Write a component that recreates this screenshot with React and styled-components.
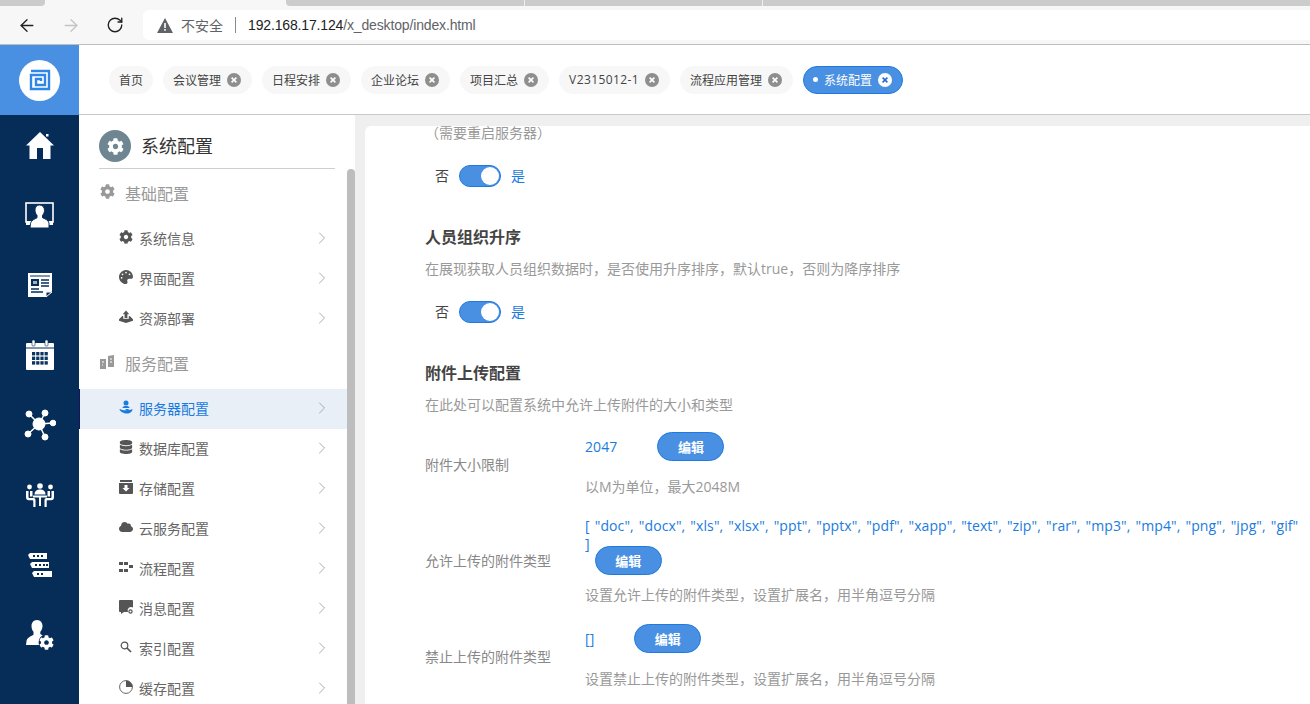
import React from 'react';
import styled, { createGlobalStyle } from 'styled-components';
import { ChevronRight, ArrowLeft, ArrowRight, RotateCw } from 'lucide-react';
import { FaCog, FaPalette, FaDatabase, FaCloud } from 'react-icons/fa';

const FONT = '"Open Sans", "Noto Sans CJK SC", sans-serif';
const BLUE = '#4a90e2';
const EDGE = '#1f7ae0';

const GlobalStyle = createGlobalStyle`
  html, body { margin: 0; padding: 0; height: 100%; overflow: hidden; background: #fff; }
  #root { height: 100%; }
  * { box-sizing: border-box; }
`;

const Page = styled.div`
  width: 1310px;
  height: 704px;
  display: flex;
  flex-direction: column;
  overflow: hidden;
  font-family: ${FONT};
  font-size: 14px;
`;

/* browser chrome */
const BrowserBar = styled.div`
  height: 45px;
  flex: none;
  background: #f7f7f7;
  border-bottom: 1px solid #bdbdbd;
  display: flex;
  flex-direction: column;
`;

const TabStrip = styled.div`
  height: 6px;
  display: grid;
  grid-template-columns: 45px 241px 239px 238px 1fr;
`;

const StripPiece = styled.div`
  background: ${p => (p.$open ? 'transparent' : '#cccccc')};
  border-radius: ${p => (p.$side === 'left' ? '0 0 4px 0' : p.$side === 'right' ? '0 0 0 4px' : '0')};
  border-right: ${p => (p.$split ? '1px solid #eeeeee' : 'none')};
`;

const Toolbar = styled.div`
  display: flex;
  align-items: flex-start;
  padding: 4px 0 0 17px;
`;

const NavButton = styled.div`
  width: 20px;
  height: 30px;
  margin-right: 24px;
  display: flex;
  align-items: center;
  justify-content: center;
  color: ${p => (p.$off ? '#c4c4c4' : '#222')};
`;

const Omnibox = styled.div`
  margin-left: -6px;
  flex: 1;
  height: 30px;
  background: #fff;
  border-radius: 6px 0 0 6px;
  display: flex;
  align-items: center;
  padding-left: 14px;
`;

const Insecure = styled.span`
  color: #5f6368;
  font-size: 14px;
  margin-left: 8px;
`;

const Divider = styled.span`
  width: 1px;
  height: 16px;
  background: #8a8a8a;
  margin: 0 12px;
`;

const Url = styled.span`
  font-family: "Liberation Sans", sans-serif;
  font-size: 14px;
  letter-spacing: -0.15px;
  color: #5f6368;
  b { font-weight: 400; color: #202124; }
`;

/* app header */
const Header = styled.header`
  height: 70px;
  flex: none;
  display: flex;
  border-bottom: 1px solid #c9c9c9;
`;

const LogoCell = styled.div`
  width: 79px;
  height: 70px;
  flex: none;
  background: ${BLUE};
  display: flex;
  align-items: center;
  justify-content: center;
`;

const LogoDisc = styled.div`
  width: 41px;
  height: 41px;
  border-radius: 50%;
  background: #fff;
  display: flex;
  align-items: center;
  justify-content: center;
`;

const TabBar = styled.nav`
  display: flex;
  align-items: center;
  gap: 10px;
  padding-left: 30px;
`;

const Tab = styled.div`
  height: 28px;
  display: flex;
  align-items: center;
  gap: 6px;
  padding: 0 ${p => (p.$plain ? '9px' : '10px')} 0 9px;
  border-radius: 14px;
  font-size: 12px;
  letter-spacing: ${p => (p.$latin ? '0.4px' : '0')};
  white-space: nowrap;
  color: ${p => (p.$active ? '#fff' : '#444')};
  background: ${p => (p.$active ? BLUE : '#f7f7f7')};
  border: 1px solid ${p => (p.$active ? EDGE : '#f7f7f7')};
`;

const TabDot = styled.span`
  width: 5px;
  height: 5px;
  border-radius: 50%;
  background: #fff;
`;

/* app body */
const Body = styled.div`
  flex: 1;
  display: flex;
  min-height: 0;
`;

const Rail = styled.aside`
  width: 79px;
  flex: none;
  background: #062c58;
  display: flex;
  flex-direction: column;
  align-items: center;
  gap: 40px;
  padding-top: 15px;
`;

const RailItem = styled.div`
  height: 30px;
  display: flex;
  align-items: center;
  justify-content: center;
`;

const Sidebar = styled.aside`
  width: 276px;
  flex: none;
  background: #fff;
  display: flex;
  flex-direction: column;
  min-height: 0;
`;

const SidebarHead = styled.div`
  height: 54px;
  flex: none;
  margin: 0 20px;
  padding-top: 15px;
  display: flex;
  align-items: flex-start;
  gap: 10px;
  border-bottom: 1px solid #cfcfcf;
  font-size: 18px;
  line-height: 32px;
  color: #333;
`;

const HeadBadge = styled.div`
  width: 32px;
  height: 32px;
  border-radius: 50%;
  background: #6e8592;
  display: flex;
  align-items: center;
  justify-content: center;
  color: #fff;
`;

const MenuWrap = styled.div`
  flex: 1;
  display: flex;
  min-height: 0;
`;

const Menu = styled.div`
  flex: 1;
  overflow: hidden;
`;

const ScrollTrack = styled.div`
  width: 8px;
  flex: none;
  background: #bdbdbd;
  border-radius: 4px 4px 0 0;
`;

const GroupRow = styled.div`
  height: 50px;
  display: flex;
  align-items: center;
  padding: 0 0 2px 20px;
  gap: 10px;
  font-size: 16px;
  color: #999;
`;

const GroupIcon = styled.span`
  width: 16px;
  height: 16px;
  margin-top: -3px;
  display: flex;
  align-items: center;
  justify-content: center;
  color: #999;
`;

const ItemRow = styled.div`
  height: 40px;
  display: flex;
  align-items: center;
  padding: 0 15px 2px ${p => (p.$active ? '39px' : '40px')};
  color: ${p => (p.$active ? '#1a7be0' : '#666')};
  background: ${p => (p.$active ? '#e9eff7' : 'transparent')};
  border-left: ${p => (p.$active ? '1px solid #14145a' : 'none')};
`;

const ItemIcon = styled.span`
  width: 14px;
  height: 14px;
  margin-right: 6px;
  margin-top: -2px;
  display: flex;
  align-items: center;
  justify-content: center;
  color: ${p => (p.$active ? '#1a7be0' : '#555')};
`;

const ItemLabel = styled.span`
  flex: 1;
`;

const Chevron = styled(ChevronRight)`
  color: #9a9a9a;
`;

/* main panel */
const Main = styled.main`
  flex: 1;
  min-width: 0;
  background: #efefef;
  padding: 11px 0 0 10px;
`;

const Card = styled.div`
  height: 100%;
  background: #fff;
  border-radius: 6px 0 0 0;
  padding-left: 60px;
  overflow: hidden;
`;

const RestartNote = styled.div`
  line-height: 14px;
  color: #999;
  white-space: nowrap;
`;

const SwitchRow = styled.div`
  display: flex;
  align-items: center;
  height: 22px;
  margin-top: ${p => p.$top}px;
  padding-left: 10px;
`;

const SwitchText = styled.span`
  margin-top: -2px;
  color: ${p => (p.$on ? '#1a7be0' : '#444')};
`;

const Track = styled.div`
  width: 42px;
  height: 22px;
  margin: 0 10px;
  border-radius: 11px;
  background: ${BLUE};
  border: 1px solid ${EDGE};
  display: flex;
  align-items: center;
  justify-content: flex-end;
  padding-right: 1px;
`;

const Knob = styled.span`
  width: 18px;
  height: 18px;
  border-radius: 50%;
  background: #fff;
`;

const SectionTitle = styled.h3`
  margin: 38px 0 0;
  font-size: 16px;
  line-height: 24px;
  font-weight: 700;
  color: #444;
`;

const SectionDesc = styled.p`
  margin: 10px 0 0;
  line-height: 20px;
  color: #999;
  white-space: nowrap;
`;

const ConfigTable = styled.div`
  margin-top: 17px;
  display: flex;
  flex-direction: column;
  gap: 19px;
`;

const ConfigRow = styled.div`
  display: grid;
  grid-template-columns: 160px 1fr;
  align-items: center;
`;

const ConfigLabel = styled.div`
  color: #888;
  padding-bottom: 2px;
`;

const ValueLine = styled.div`
  display: flex;
  align-items: ${p => (p.$top ? 'flex-start' : 'center')};
  color: #1a7be0;
  line-height: 18px;
  white-space: nowrap;
  letter-spacing: 0.1px;
  word-spacing: 1.3px;
`;

const EditButton = styled.button`
  width: 67px;
  height: 29px;
  margin-left: ${p => p.$left}px;
  margin-top: ${p => p.$top || 0}px;
  padding: 0;
  border-radius: 15px;
  background: ${BLUE};
  border: 1px solid ${EDGE};
  color: #fff;
  font-family: ${FONT};
  font-size: 13px;
  font-weight: 700;
`;

const Hint = styled.div`
  margin-top: ${p => p.$top}px;
  margin-bottom: ${p => p.$bottom || 0}px;
  line-height: 20px;
  color: #999;
`;

/* drawn icons */
const Logo = () => (
  <svg width="24" height="24" viewBox="0 0 24 24" fill="none" stroke="#2f86e6" strokeWidth="2.4">
    <path d="M3 3h18v18H3V7h14v10H8v-6h5v2" />
  </svg>
);

const CloseDot = ({ $active }) => (
  <svg width="14" height="14" viewBox="0 0 14 14">
    <circle cx="7" cy="7" r="7" fill={$active ? '#fff' : '#8e8e8e'} />
    <path d="M4.6 4.6l4.8 4.8M9.4 4.6L4.6 9.4" stroke={$active ? '#1f6fd0' : '#fff'} strokeWidth="1.6" />
  </svg>
);

const WarnIcon = () => (
  <svg width="16" height="15" viewBox="0 0 16 15">
    <path d="M8 0l8 15H0z" fill="#5f6368" />
    <path d="M7.2 5h1.600v5H7.200zM7.200 11h1.600v1.700H7.200z" fill="#fff" />
  </svg>
);

const HomeIcon = () => (
  <svg width="30" height="29" viewBox="0 0 30 29" fill="#fff">
    <path d="M15 1l14 13.500h-3.500V28H18V17h-6v11H4.500V14.500H1z" />
    <rect x="21" y="3" width="2.500" height="2.500" />
  </svg>
);

const MonitorIcon = () => (
  <svg width="29" height="27" viewBox="0 0 29 27">
    <rect x="1" y="1" width="27" height="19" fill="none" stroke="#fff" strokeWidth="1.600" />
    <path d="M1 19h27v4H1z" fill="#fff" />
    <path d="M14.500 3c3.200 0 5 2.400 5 5.300 0 2.200-1 4-2 5v2.400c2 1 6 2.200 6.500 5.300L24 26H5l.5-4.700c.6-3 4.500-4.500 6.500-5.500v-2.500c-1-1-2-2.800-2-5C10 5.400 11.300 3 14.500 3z" fill="#fff" stroke="#062c58" strokeWidth="1" />
  </svg>
);

const NewsIcon = () => (
  <svg width="26" height="26" viewBox="0 0 26 26">
    <path d="M1 1h24v18l-6 6H1z" fill="#fff" />
    <path d="M3 4h20" stroke="#062c58" strokeWidth="1" />
    <rect x="4" y="7" width="8" height="7" fill="#062c58" />
    <rect x="6" y="9" width="4" height="3" fill="#9fb0c5" />
    <path d="M14 8h8M14 11h8M14 14h8M4 17h8M4 20h12" stroke="#062c58" strokeWidth="1.500" />
    <path d="M19 25v-5h6z" fill="#062c58" stroke="#fff" strokeWidth="1" />
  </svg>
);

const CalendarIcon = () => (
  <svg width="28" height="30" viewBox="0 0 28 30">
    <rect x="0" y="3" width="28" height="27" rx="1" fill="#fff" />
    <path d="M0 8h28" stroke="#062c58" strokeWidth="1" />
    <rect x="6" y="0" width="3" height="6" rx="1" fill="#fff" stroke="#062c58" strokeWidth=".6" />
    <rect x="19" y="0" width="3" height="6" rx="1" fill="#fff" stroke="#062c58" strokeWidth=".6" />
    <g fill="#0b3461">
      {[0, 1, 2].map(r => [0, 1, 2, 3].map(c => (
        <rect key={`${r}-${c}`} x={6 + c * 4.2} y={12 + r * 4.6} width="3.200" height="3.400" />
      )))}
    </g>
  </svg>
);

const HubIcon = () => (
  <svg width="32" height="32" viewBox="0 0 32 32" fill="#fff" stroke="#fff">
    <path d="M15 15L5 5M15 15L21 4M15 15L29 14M15 15L4 25M15 15L21 28" strokeWidth="1.500" />
    <circle cx="15" cy="15" r="6" />
    <circle cx="5" cy="5" r="3" />
    <circle cx="21" cy="4" r="3" />
    <circle cx="29" cy="14" r="2.800" />
    <circle cx="4" cy="25" r="3" />
    <circle cx="21" cy="28" r="3" />
  </svg>
);

const MeetingIcon = () => (
  <svg width="30" height="24" viewBox="0 0 30 24" fill="#fff">
    <circle cx="15" cy="3" r="2.800" />
    <path d="M9.500 11.500c0-3.500 2.200-5 5.500-5s5.500 1.500 5.500 5z" />
    <rect x="8" y="12.500" width="14" height="2" />
    <circle cx="4.500" cy="4" r="2.400" />
    <circle cx="25.500" cy="4" r="2.400" />
    <path d="M1 8h2.500v6c0 .8.500 1 1.200 1H8.500c1.200 0 2 .8 2 2V24H8.300v-6c0-.5-.2-.8-.8-.8H4c-2 0-3-1-3-3zM5 8h2.500v5.500H5zM29 8h-2.500v6c0 .8-.5 1-1.200 1H21.500c-1.200 0-2 .8-2 2V24h2.200v-6c0-.5.2-.8.8-.8H26c2 0 3-1 3-3zM25 8h-2.500v5.500H25z" />
    <rect x="14" y="14" width="2" height="9" />
  </svg>
);

const RowsIcon = () => (
  <svg width="28" height="26" viewBox="0 0 28 26">
    <g fill="#fff">
      <path d="M2 3l2-2h17v6H4zM4 12l2-2h17v6H6zM6 21l2-2h18v6H8z" />
    </g>
    <g fill="#062c58">
      {[7, 11, 15].map(x => <rect key={x} x={x} y="3" width="2" height="2" />)}
      {[9, 13, 17, 20].map(x => <rect key={x} x={x} y="12" width="2" height="2" />)}
      {[11, 15].map(x => <rect key={x} x={x} y="21" width="2" height="2" />)}
    </g>
  </svg>
);

const UserCogIcon = () => (
  <svg width="28" height="30" viewBox="0 0 28 30">
    <path d="M11 0c3.500 0 5.500 2.800 5.500 6 0 2.300-1 4.500-2.200 5.700V14c.8.500 1.700.9 2.500 1.300-3 1.500-4.800 5-3.800 9.700H0l.6-4.500C1.300 17.800 5.500 16 7.500 14.800v-3C6.300 10.500 5.500 8.300 5.500 6 5.500 2.800 7.500 0 11 0z" fill="#fff" />
    <foreignObject x="13" y="15" width="15" height="15">
      <FaCog size={15} color="#fff" />
    </foreignObject>
  </svg>
);

const HandUserIcon = () => (
  <svg width="14" height="14" viewBox="0 0 14 14" fill="currentColor">
    <circle cx="7" cy="3" r="2.500" />
    <path d="M3.500 8c0-1.400 1.500-2 3.500-2s3.500.6 3.500 2z" />
    <path d="M.5 9c1.500 0 2.500 1.300 4.500 1.300h2.500L6 9h2.500l2.500 1 2.500-1c0 2.500-2.500 4.500-5.500 4.500S.5 11.500.5 9z" />
  </svg>
);

const TrayUpIcon = () => (
  <svg width="15" height="14" viewBox="0 0 15 14" fill="currentColor">
    <path d="M7.500 0L11 4H9v4H6V4H4z" />
    <path d="M3.500 6L0 9.500V11l7.500 2.500L15 11V9.500L11.500 6H10.500v3h-6V6z" />
  </svg>
);

const ServersIcon = () => (
  <svg width="14" height="14" viewBox="0 0 14 14" fill="currentColor">
    <path d="M0 4h6v10H0zM8 1l6-1v12H8z" />
    <path d="M2 7h2M2 10h1M10 4h2M10 7h2" stroke="#fff" strokeWidth="1" />
  </svg>
);

const BoxDownIcon = () => (
  <svg width="14" height="14" viewBox="0 0 14 14" fill="currentColor">
    <path d="M1 0h12v2H1zM0 3h14v10a1 1 0 0 1-1 1H1a1 1 0 0 1-1-1z" />
    <path d="M5.500 5h3v3H10.500L7 11.500 3.500 8h2z" fill="#fff" />
  </svg>
);

const FlowIcon = () => (
  <svg width="14" height="12" viewBox="0 0 14 12" fill="currentColor">
    <rect x="0" y="1" width="4" height="3" />
    <rect x="5" y="1" width="4" height="3" />
    <rect x="10" y="4" width="4" height="3" />
    <rect x="0" y="8" width="4" height="3" />
    <rect x="5" y="8" width="4" height="3" />
  </svg>
);

const MessageIcon = () => (
  <svg width="14" height="14" viewBox="0 0 14 14" fill="currentColor">
    <path d="M1 0h12a1 1 0 0 1 1 1v6.500a3.500 3.500 0 0 0-5 4.500H5l-3 2v-2H1a1 1 0 0 1-1-1V1a1 1 0 0 1 1-1z" />
    <circle cx="11.500" cy="11.500" r="1.600" fill="none" stroke="currentColor" strokeWidth="1.200" />
  </svg>
);

const LensIcon = () => (
  <svg width="12" height="12" viewBox="0 0 12 12" fill="none" stroke="currentColor">
    <circle cx="4.500" cy="4.500" r="3.300" strokeWidth="1.200" />
    <path d="M7 7l4 4" strokeWidth="1.700" />
  </svg>
);

const PieIcon = () => (
  <svg width="14" height="14" viewBox="0 0 14 14">
    <circle cx="7" cy="7" r="6.400" fill="none" stroke="#666" strokeWidth="1" />
    <path d="M7 0.500a6.500 6.500 0 0 1 6.500 6.500H7z" fill="#555" />
  </svg>
);

const TABS = [
  { name: '首页', plain: true },
  { name: '会议管理' },
  { name: '日程安排' },
  { name: '企业论坛' },
  { name: '项目汇总' },
  { name: 'V2315012-1', latin: true },
  { name: '流程应用管理' },
  { name: '系统配置', active: true },
];

const RAIL = [HomeIcon, MonitorIcon, NewsIcon, CalendarIcon, HubIcon, MeetingIcon, RowsIcon, UserCogIcon];

const MENU = [
  {
    group: '基础配置',
    icon: <FaCog size={15} />,
    items: [
      { name: '系统信息', icon: <FaCog size={14} /> },
      { name: '界面配置', icon: <FaPalette size={14} /> },
      { name: '资源部署', icon: <TrayUpIcon /> },
    ],
  },
  {
    group: '服务配置',
    icon: <ServersIcon />,
    items: [
      { name: '服务器配置', icon: <HandUserIcon />, active: true },
      { name: '数据库配置', icon: <FaDatabase size={14} /> },
      { name: '存储配置', icon: <BoxDownIcon /> },
      { name: '云服务配置', icon: <FaCloud size={14} /> },
      { name: '流程配置', icon: <FlowIcon /> },
      { name: '消息配置', icon: <MessageIcon /> },
      { name: '索引配置', icon: <LensIcon /> },
      { name: '缓存配置', icon: <PieIcon /> },
    ],
  },
];

const YesNoSwitch = ({ top }) => (
  <SwitchRow $top={top}>
    <SwitchText>否</SwitchText>
    <Track><Knob /></Track>
    <SwitchText $on>是</SwitchText>
  </SwitchRow>
);

export default function App() {
  return (
    <Page>
      <GlobalStyle />
      <BrowserBar>
        <TabStrip>
          <StripPiece $side="left" />
          <StripPiece $open />
          <StripPiece $side="right" $split />
          <StripPiece $split />
          <StripPiece />
        </TabStrip>
        <Toolbar>
          <NavButton><ArrowLeft size={21} strokeWidth={1.6} /></NavButton>
          <NavButton $off><ArrowRight size={21} strokeWidth={1.6} /></NavButton>
          <NavButton><RotateCw size={18} strokeWidth={1.8} /></NavButton>
          <Omnibox>
            <WarnIcon />
            <Insecure>不安全</Insecure>
            <Divider />
            <Url><b>192.168.17.124</b>/x_desktop/index.html</Url>
          </Omnibox>
        </Toolbar>
      </BrowserBar>

      <Header>
        <LogoCell>
          <LogoDisc><Logo /></LogoDisc>
        </LogoCell>
        <TabBar>
          {TABS.map(tab => (
            <Tab key={tab.name} $active={tab.active} $plain={tab.plain} $latin={tab.latin}>
              {tab.active && <TabDot />}
              {tab.name}
              {!tab.plain && <CloseDot $active={tab.active} />}
            </Tab>
          ))}
        </TabBar>
      </Header>

      <Body>
        <Rail>
          {RAIL.map((Icon, i) => (
            <RailItem key={i}><Icon /></RailItem>
          ))}
        </Rail>

        <Sidebar>
          <SidebarHead>
            <HeadBadge><FaCog size={17} /></HeadBadge>
            系统配置
          </SidebarHead>
          <MenuWrap>
            <Menu>
              {MENU.map(section => (
                <React.Fragment key={section.group}>
                  <GroupRow>
                    <GroupIcon>{section.icon}</GroupIcon>
                    {section.group}
                  </GroupRow>
                  {section.items.map(item => (
                    <ItemRow key={item.name} $active={item.active}>
                      <ItemIcon $active={item.active}>{item.icon}</ItemIcon>
                      <ItemLabel>{item.name}</ItemLabel>
                      <Chevron size={20} strokeWidth={1} />
                    </ItemRow>
                  ))}
                </React.Fragment>
              ))}
            </Menu>
            <ScrollTrack />
          </MenuWrap>
        </Sidebar>

        <Main>
          <Card>
            <RestartNote>（需要重启服务器）</RestartNote>
            <YesNoSwitch top={25} />

            <SectionTitle>人员组织升序</SectionTitle>
            <SectionDesc>在展现获取人员组织数据时，是否使用升序排序，默认true，否则为降序排序</SectionDesc>
            <YesNoSwitch top={22} />

            <SectionTitle>附件上传配置</SectionTitle>
            <SectionDesc>在此处可以配置系统中允许上传附件的大小和类型</SectionDesc>

            <ConfigTable>
              <ConfigRow>
                <ConfigLabel>附件大小限制</ConfigLabel>
                <div>
                  <ValueLine>2047<EditButton $left={40}>编辑</EditButton></ValueLine>
                  <Hint $top={16} $bottom={1}>以M为单位，最大2048M</Hint>
                </div>
              </ConfigRow>
              <ConfigRow>
                <ConfigLabel>允许上传的附件类型</ConfigLabel>
                <div>
                  <ValueLine>[ "doc", "docx", "xls", "xlsx", "ppt", "pptx", "pdf", "xapp", "text", "zip", "rar", "mp3", "mp4", "png", "jpg", "gif"</ValueLine>
                  <ValueLine $top>]<EditButton $left={5} $top={11}>编辑</EditButton></ValueLine>
                  <Hint $top={10}>设置允许上传的附件类型，设置扩展名，用半角逗号分隔</Hint>
                </div>
              </ConfigRow>
              <ConfigRow>
                <ConfigLabel>禁止上传的附件类型</ConfigLabel>
                <div>
                  <ValueLine>[]<EditButton $left={40}>编辑</EditButton></ValueLine>
                  <Hint $top={16}>设置禁止上传的附件类型，设置扩展名，用半角逗号分隔</Hint>
                </div>
              </ConfigRow>
            </ConfigTable>
          </Card>
        </Main>
      </Body>
    </Page>
  );
}
